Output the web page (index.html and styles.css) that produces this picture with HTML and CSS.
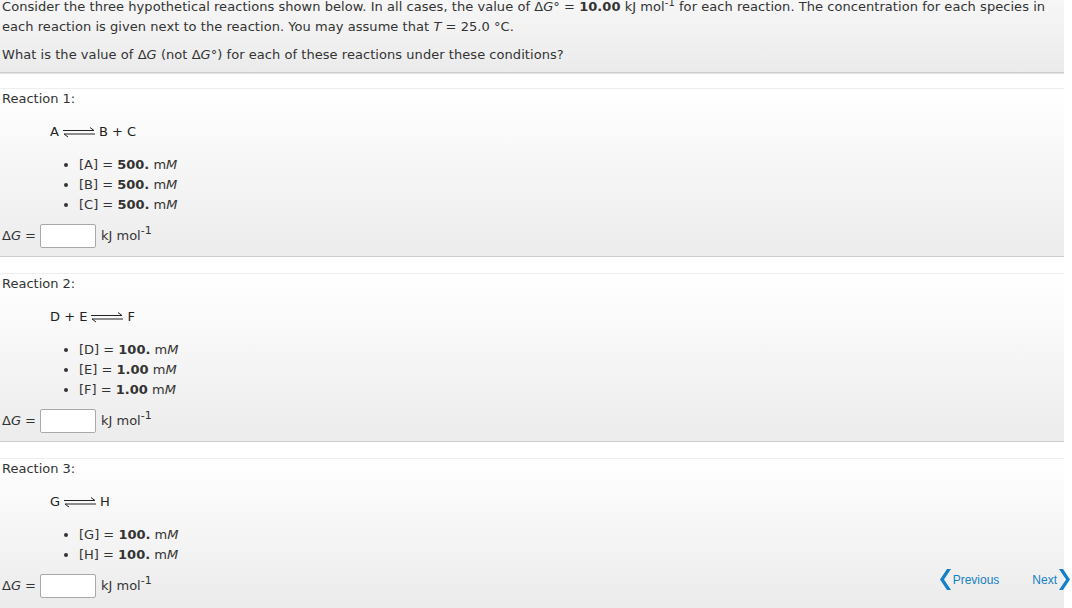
FILE: index.html
```html
<!DOCTYPE html>
<html lang="en">
<head>
    <meta charset="UTF-8">
    <title>Gibbs free energy question</title>
    <link rel="stylesheet" href="styles.css">
</head>
<body>
    <div class="intro">
        <p>Consider the three hypothetical reactions shown below. In all cases, the value of &Delta;<i>G</i>&deg; = <b>10.00</b> kJ mol<sup>-1</sup> for each reaction. The concentration for each species in each reaction is given next to the reaction. You may assume that <i>T</i> = 25.0 &deg;C.</p>
        <p>What is the value of &Delta;<i>G</i> (not &Delta;<i>G</i>&deg;) for each of these reactions under these conditions?</p>
    </div>

    <div class="reaction">
        <div class="reaction-title">Reaction 1:</div>
        <div class="equation">A <svg class="eq-arrow" width="32" height="12" viewBox="0 0 32 12"><path d="M0 4.5H31L27 1.5M32 8H1L5 11" fill="none" stroke="#222" stroke-width="1"/></svg> B + C</div>
        <ul class="species">
            <li>[A] = <b>500.</b> m<i>M</i></li>
            <li>[B] = <b>500.</b> m<i>M</i></li>
            <li>[C] = <b>500.</b> m<i>M</i></li>
        </ul>
        <div class="answer">
            <span class="answer-label">&Delta;<i>G</i> =</span>
            <input type="text" class="answer-input">
            <span class="unit">kJ mol<sup>-1</sup></span>
        </div>
    </div>

    <div class="reaction">
        <div class="reaction-title">Reaction 2:</div>
        <div class="equation">D + E <svg class="eq-arrow" width="32" height="12" viewBox="0 0 32 12"><path d="M0 4.5H31L27 1.5M32 8H1L5 11" fill="none" stroke="#222" stroke-width="1"/></svg> F</div>
        <ul class="species">
            <li>[D] = <b>100.</b> m<i>M</i></li>
            <li>[E] = <b>1.00</b> m<i>M</i></li>
            <li>[F] = <b>1.00</b> m<i>M</i></li>
        </ul>
        <div class="answer">
            <span class="answer-label">&Delta;<i>G</i> =</span>
            <input type="text" class="answer-input">
            <span class="unit">kJ mol<sup>-1</sup></span>
        </div>
    </div>

    <div class="reaction reaction-last">
        <div class="reaction-title">Reaction 3:</div>
        <div class="equation">G <svg class="eq-arrow" width="32" height="12" viewBox="0 0 32 12"><path d="M0 4.5H31L27 1.5M32 8H1L5 11" fill="none" stroke="#222" stroke-width="1"/></svg> H</div>
        <ul class="species">
            <li>[G] = <b>100.</b> m<i>M</i></li>
            <li>[H] = <b>100.</b> m<i>M</i></li>
        </ul>
        <div class="answer">
            <span class="answer-label">&Delta;<i>G</i> =</span>
            <input type="text" class="answer-input">
            <span class="unit">kJ mol<sup>-1</sup></span>
        </div>
    </div>

    <div class="nav">
        <a class="nav-link" href="#"><svg width="11" height="21" viewBox="0 0 11 21"><polygon points="7,0 11,0 4,10.5 11,21 7,21 0,10.5" fill="#1680c6"/></svg>Previous</a>
        <a class="nav-link next" href="#">Next<svg width="11" height="21" viewBox="0 0 11 21"><polygon points="0,0 4,0 11,10.5 4,21 0,21 7,10.5" fill="#1680c6"/></svg></a>
    </div>
</body>
</html>
```

FILE: styles.css
```css
body {
    margin: 0;
    font-family: "DejaVu Sans", Verdana, sans-serif;
    font-size: 13px;
    line-height: 20px;
    color: #333;
    background-color: #ffffff;
    overflow: hidden;
}
sup {
    font-size: 10px;
    line-height: 0;
    vertical-align: 5px;
}
.intro {
    width: 1062px;
    margin-top: -3px;
    padding: 0 0 7px 2px;
    background: linear-gradient(#f7f7f7, #ebebeb);
    border-bottom: 1px solid #cccccc;
    box-shadow: 0 1px 0 #e2e2e2;
    margin-bottom: 15px;
    letter-spacing: 0.05px;
}
.intro p {
    margin: 0 0 8px 0;
}
.intro p:last-child {
    margin-bottom: 0;
}
.reaction {
    width: 1062px;
    padding: 0 0 8px 2px;
    background: linear-gradient(#ffffff, #ececec);
    border-top: 1px solid #eeeeee;
    border-bottom: 1px solid #cccccc;
    margin-bottom: 16px;
}
.reaction-last {
    margin-bottom: 0;
    height: 170px;
    background: linear-gradient(#ffffff, #ebebeb 150px);
}
.reaction-title {
    height: 20px;
}
.equation {
    margin-top: 13px;
    padding-left: 48px;
    height: 20px;
    display: flex;
    align-items: center;
    gap: 4px;
    color: #222;
}
.eq-arrow {
    display: block;
}
.species {
    margin: 13px 0 0 0;
    padding-left: 77px;
}
.answer {
    margin-top: 9px;
    display: flex;
    align-items: center;
    height: 24px;
}
.answer-label {
    width: 38px;
}
.answer-input {
    width: 56px;
    height: 24px;
    box-sizing: border-box;
    margin: 0;
    border: 1px solid #a9a9a9;
    border-radius: 2px;
    background-color: #ffffff;
}
.unit {
    margin-left: 5px;
}
.unit sup {
    font-size: 11px;
    vertical-align: 6px;
}
.nav {
    position: absolute;
    right: 2px;
    top: 569px;
    display: flex;
    gap: 33px;
}
.nav-link {
    display: flex;
    align-items: center;
    gap: 2px;
    font-family: "Liberation Sans", Arial, sans-serif;
    font-size: 12px;
    color: #1680c6;
    text-decoration: none;
}
```
